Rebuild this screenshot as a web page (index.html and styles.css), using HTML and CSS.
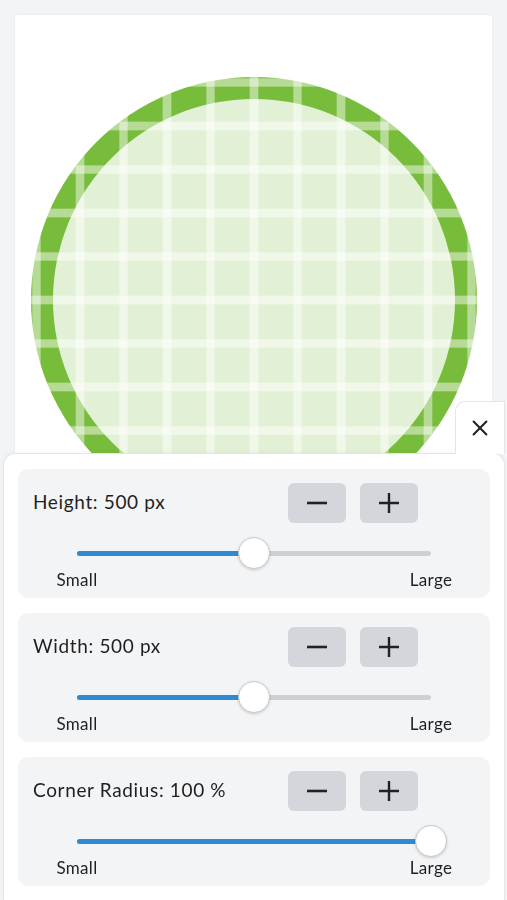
FILE: index.html
```html
<!DOCTYPE html>
<html lang="en">
<head>
<meta charset="utf-8">
<title>Shape editor</title>
<link rel="stylesheet" href="styles.css">
</head>
<body>
<main class="canvas">
  <div class="shape">
    <div class="shape-inner"></div>
  </div>
</main>

<section class="sheet">
  <button class="close" aria-label="Close">
    <svg viewBox="0 0 24 24" width="22" height="22"><path d="M5 5 L19 19 M19 5 L5 19" stroke="#1f1f1f" stroke-width="2.2" stroke-linecap="round" fill="none"/></svg>
  </button>

  <div class="ctl">
    <div class="row">
      <span class="label">Height: 500 px</span>
      <div class="btns">
        <button class="btn" aria-label="Decrease"><svg viewBox="0 0 24 24" width="24" height="24"><path d="M2 12 H22" stroke="#222" stroke-width="2.6" fill="none"/></svg></button>
        <button class="btn" aria-label="Increase"><svg viewBox="0 0 24 24" width="24" height="24"><path d="M2 12 H22 M12 2 V22" stroke="#222" stroke-width="2.4" fill="none"/></svg></button>
      </div>
    </div>
    <div class="slider">
      <div class="track"><div class="fill" style="width:50%"></div><div class="thumb" style="left:50%"></div></div>
    </div>
    <div class="ends"><span class="end"><span>Small</span></span><span class="end"><span>Large</span></span></div>
  </div>

  <div class="ctl">
    <div class="row">
      <span class="label">Width: 500 px</span>
      <div class="btns">
        <button class="btn" aria-label="Decrease"><svg viewBox="0 0 24 24" width="24" height="24"><path d="M2 12 H22" stroke="#222" stroke-width="2.6" fill="none"/></svg></button>
        <button class="btn" aria-label="Increase"><svg viewBox="0 0 24 24" width="24" height="24"><path d="M2 12 H22 M12 2 V22" stroke="#222" stroke-width="2.4" fill="none"/></svg></button>
      </div>
    </div>
    <div class="slider">
      <div class="track"><div class="fill" style="width:50%"></div><div class="thumb" style="left:50%"></div></div>
    </div>
    <div class="ends"><span class="end"><span>Small</span></span><span class="end"><span>Large</span></span></div>
  </div>

  <div class="ctl">
    <div class="row">
      <span class="label">Corner Radius: 100 %</span>
      <div class="btns">
        <button class="btn" aria-label="Decrease"><svg viewBox="0 0 24 24" width="24" height="24"><path d="M2 12 H22" stroke="#222" stroke-width="2.6" fill="none"/></svg></button>
        <button class="btn" aria-label="Increase"><svg viewBox="0 0 24 24" width="24" height="24"><path d="M2 12 H22 M12 2 V22" stroke="#222" stroke-width="2.4" fill="none"/></svg></button>
      </div>
    </div>
    <div class="slider">
      <div class="track"><div class="fill" style="width:100%"></div><div class="thumb" style="left:100%"></div></div>
    </div>
    <div class="ends"><span class="end"><span>Small</span></span><span class="end"><span>Large</span></span></div>
  </div>
</section>
</body>
</html>
```

FILE: styles.css
```css
* { box-sizing: border-box; }

html, body {
  margin: 0;
  padding: 0;
  background: #f3f4f6;
  height: 100%;
  overflow: hidden;
}

body {
  padding: 15px 15px 0 15px;
  font-family: "Lato", "Open Sans", sans-serif;
  color: #1f1f1f;
}

.canvas {
  background: #ffffff;
  border-radius: 3px;
  box-shadow: 0 0 0 1px #eceef1;
  height: 900px;
  padding: 62px 0 0 16px;
}

.shape {
  width: 446px;
  height: 446px;
  border-radius: 50%;
  padding: 22px;
  background-color: #78bc3c;
  background-image:
    repeating-linear-gradient(90deg, rgba(255,255,255,0) 0 0.5px, rgba(255,255,255,0.46) 2px 9px, rgba(255,255,255,0) 10.5px 43.5px),
    repeating-linear-gradient(180deg, rgba(255,255,255,0) 0 0.5px, rgba(255,255,255,0.46) 2px 9px, rgba(255,255,255,0) 10.5px 43.5px);
}

.shape-inner {
  width: 100%;
  height: 100%;
  border-radius: 50%;
  background: rgba(255,255,255,0.79);
}

.sheet {
  position: fixed;
  left: 3px;
  right: 2px;
  bottom: 0;
  background: #ffffff;
  border: 1px solid #e3e5e9;
  border-bottom: none;
  border-radius: 12px 12px 0 0;
  padding: 15px 14px 14px 14px;
  display: flex;
  flex-direction: column;
  gap: 15px;
  box-shadow: 0 -1px 4px rgba(0,0,0,0.04);
}

.close {
  position: absolute;
  right: -1px;
  top: -53px;
  width: 50px;
  height: 53px;
  background: #ffffff;
  border: 1px solid #e3e5e9;
  border-bottom: none;
  border-radius: 10px 0 0 0;
  display: flex;
  align-items: center;
  justify-content: center;
  padding: 0;
}

.ctl {
  background: #f3f4f6;
  border-radius: 10px;
  height: 129px;
  padding: 14px 15px 0 15px;
}

.row {
  display: flex;
  align-items: center;
  height: 40px;
}

.label {
  flex: 1;
  font-size: 19px;
  letter-spacing: 0.65px;
  padding-bottom: 3px;
}

.btns {
  display: flex;
  gap: 14px;
  margin-right: 57px;
}

.btn {
  width: 58px;
  height: 40px;
  border: none;
  border-radius: 6px;
  background: #d3d6db;
  display: flex;
  align-items: center;
  justify-content: center;
  padding: 0;
}

.slider {
  margin: 14px 44px 0 44px;
  height: 32px;
  display: flex;
  align-items: center;
}

.track {
  position: relative;
  width: 100%;
  height: 5px;
  border-radius: 3px;
  background: #cfd0d2;
}

.fill {
  height: 100%;
  border-radius: 3px;
  background: #2f8ad6;
}

.thumb {
  position: absolute;
  top: 50%;
  width: 32px;
  height: 32px;
  margin: -16px 0 0 -16px;
  border-radius: 50%;
  background: #ffffff;
  border: 1px solid #c9cacc;
  box-shadow: 0 1px 3px rgba(0,0,0,0.18);
}

.ends {
  margin: 1px 44px 0 44px;
  display: flex;
  justify-content: space-between;
  font-size: 17px;
  letter-spacing: 0.3px;
  line-height: 20px;
}

.end {
  width: 0;
  display: flex;
  justify-content: center;
  white-space: nowrap;
}
```
